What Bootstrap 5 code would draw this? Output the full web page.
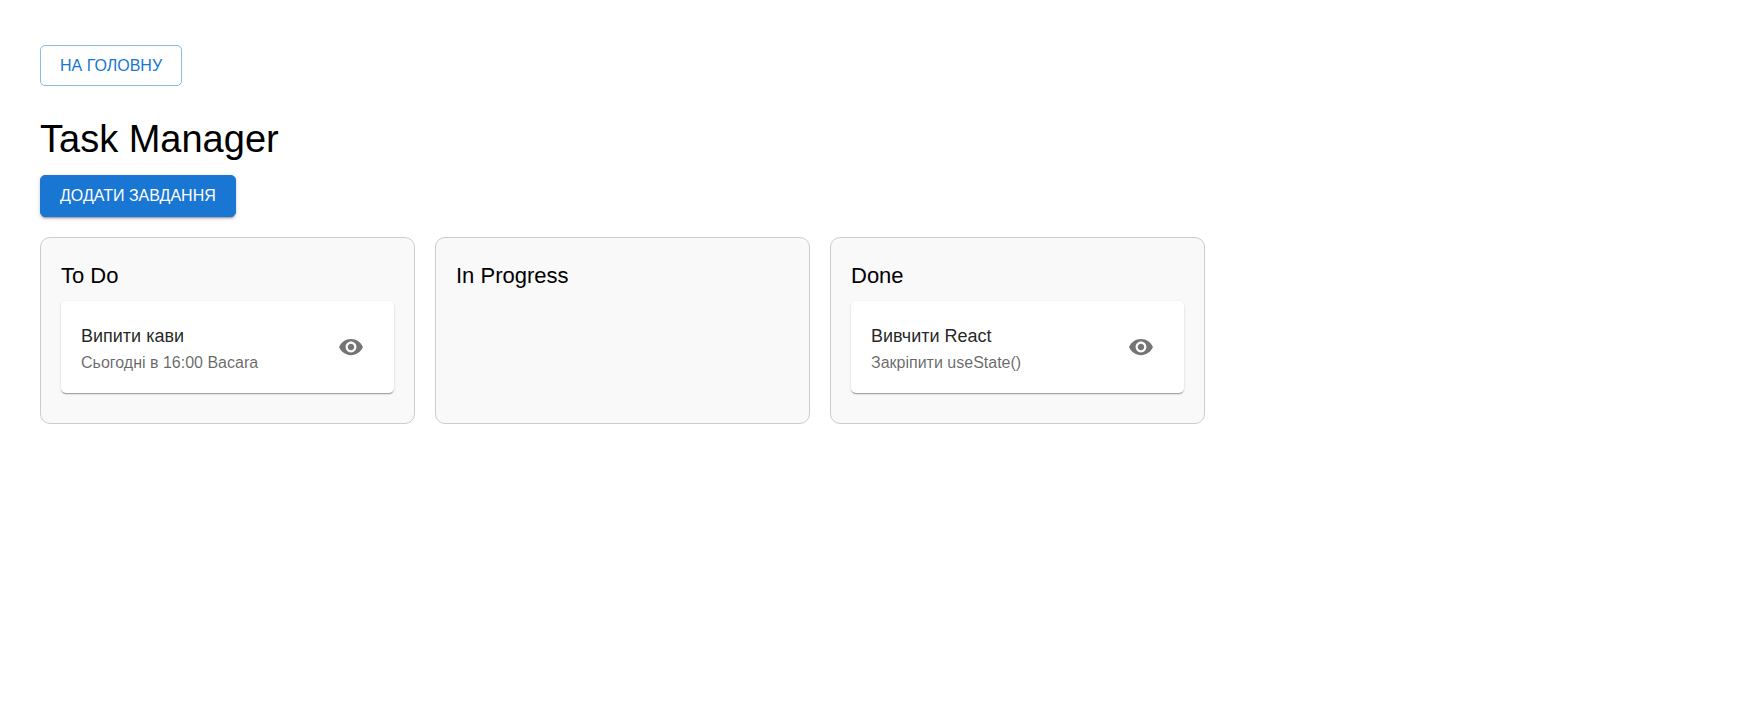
<!DOCTYPE html>
<html lang="uk">
<head>
<meta charset="utf-8">
<meta name="viewport" content="width=device-width, initial-scale=1">
<title>Task Manager</title>
<link href="https://cdn.jsdelivr.net/npm/bootstrap@5.3.0/dist/css/bootstrap.min.css" rel="stylesheet">
<style>
  body { font-family: "Liberation Sans", Arial, sans-serif; color: #000; background: #fff; }
  .page { padding: 45px 40px; }
  .btn-app {
    --bs-btn-font-size: 16px; --bs-btn-line-height: 26px;
    --bs-btn-padding-x: 19px; --bs-btn-padding-y: 7px;
    --bs-btn-border-radius: 5px;
    text-transform: uppercase;
  }
  .btn-home {
    --bs-btn-line-height: 25px;
    --bs-btn-color: #1976d2; --bs-btn-border-color: rgba(25,118,210,.5);
    --bs-btn-hover-color: #1976d2; --bs-btn-hover-bg: #f3f8fd; --bs-btn-hover-border-color: #1976d2;
  }
  .btn-add {
    --bs-btn-color: #fff; --bs-btn-bg: #1976d2; --bs-btn-border-color: #1976d2;
    --bs-btn-hover-color: #fff; --bs-btn-hover-bg: #1565c0; --bs-btn-hover-border-color: #1565c0;
    box-shadow: 0 3px 1px -2px rgba(0,0,0,.2), 0 2px 2px rgba(0,0,0,.14), 0 1px 5px rgba(0,0,0,.12);
  }
  .page-title { font-size: 38px; line-height: 46px; font-weight: 400; margin: 30px 0 13px; }
  .board { --bs-gutter-x: 20px; --bs-gutter-y: 20px; }
  .board-wrap { max-width: 1165px; margin-top: 20px; }
  .lane { background: #f9f9f9; border: 1px solid #ccc; border-radius: 10px; padding: 20px; }
  .lane-title { font-size: 22px; line-height: 35px; font-weight: 400; margin-bottom: 8px; }
  .task {
    background: #fff; border-radius: 5px; padding: 19px 20px; margin-bottom: 10px;
    box-shadow: 0 2px 1px -1px rgba(0,0,0,.2), 0 1px 1px rgba(0,0,0,.14), 0 1px 3px rgba(0,0,0,.12);
  }
  .task-title { font-size: 18px; line-height: 32px; font-weight: 400; color: rgba(0,0,0,.87); margin: 0; }
  .task-note { font-size: 16px; line-height: 22px; color: rgba(0,0,0,.6); margin: 0; }
  .btn-view { --bs-btn-padding-x: 9px; --bs-btn-padding-y: 9px; --bs-btn-border-radius: 50%; --bs-btn-color: #757575; --bs-btn-line-height: 1; --bs-btn-hover-bg: #f5f5f5; }
  .btn-view svg { display: block; width: 26px; height: 26px; fill: currentColor; }
</style>
</head>
<body>
<main class="page">
  <div class="d-flex"><button type="button" class="btn btn-app btn-home">На головну</button></div>
  <h1 class="page-title">Task Manager</h1>
  <div class="d-flex"><button type="button" class="btn btn-app btn-add">Додати завдання</button></div>
  <div class="board-wrap">
    <div class="row row-cols-1 row-cols-md-3 board">
      <div class="col">
        <section class="lane h-100">
          <h2 class="lane-title">To Do</h2>
          <article class="task d-flex align-items-center justify-content-between">
            <div>
              <h3 class="task-title">Випити кави</h3>
              <p class="task-note">Сьогодні в 16:00 Bacara</p>
            </div>
            <button type="button" class="btn btn-view" aria-label="Переглянути"><svg viewBox="0 0 24 24"><path d="M12 4.5C7 4.5 2.73 7.61 1 12c1.73 4.39 6 7.5 11 7.5s9.27-3.11 11-7.5c-1.73-4.39-6-7.5-11-7.5zM12 17c-2.76 0-5-2.24-5-5s2.24-5 5-5 5 2.24 5 5-2.24 5-5 5zm0-8c-1.66 0-3 1.34-3 3s1.34 3 3 3 3-1.34 3-3-1.34-3-3-3z"/></svg></button>
          </article>
        </section>
      </div>
      <div class="col">
        <section class="lane h-100">
          <h2 class="lane-title">In Progress</h2>
        </section>
      </div>
      <div class="col">
        <section class="lane h-100">
          <h2 class="lane-title">Done</h2>
          <article class="task d-flex align-items-center justify-content-between">
            <div>
              <h3 class="task-title">Вивчити React</h3>
              <p class="task-note">Закріпити useState()</p>
            </div>
            <button type="button" class="btn btn-view" aria-label="Переглянути"><svg viewBox="0 0 24 24"><path d="M12 4.5C7 4.5 2.73 7.61 1 12c1.73 4.39 6 7.5 11 7.5s9.27-3.11 11-7.5c-1.73-4.39-6-7.5-11-7.5zM12 17c-2.76 0-5-2.24-5-5s2.24-5 5-5 5 2.24 5 5-2.24 5-5 5zm0-8c-1.66 0-3 1.34-3 3s1.34 3 3 3 3-1.34 3-3-1.34-3-3-3z"/></svg></button>
          </article>
        </section>
      </div>
    </div>
  </div>
</main>
<script src="https://cdn.jsdelivr.net/npm/bootstrap@5.3.0/dist/js/bootstrap.bundle.min.js"></script>
</body>
</html>
